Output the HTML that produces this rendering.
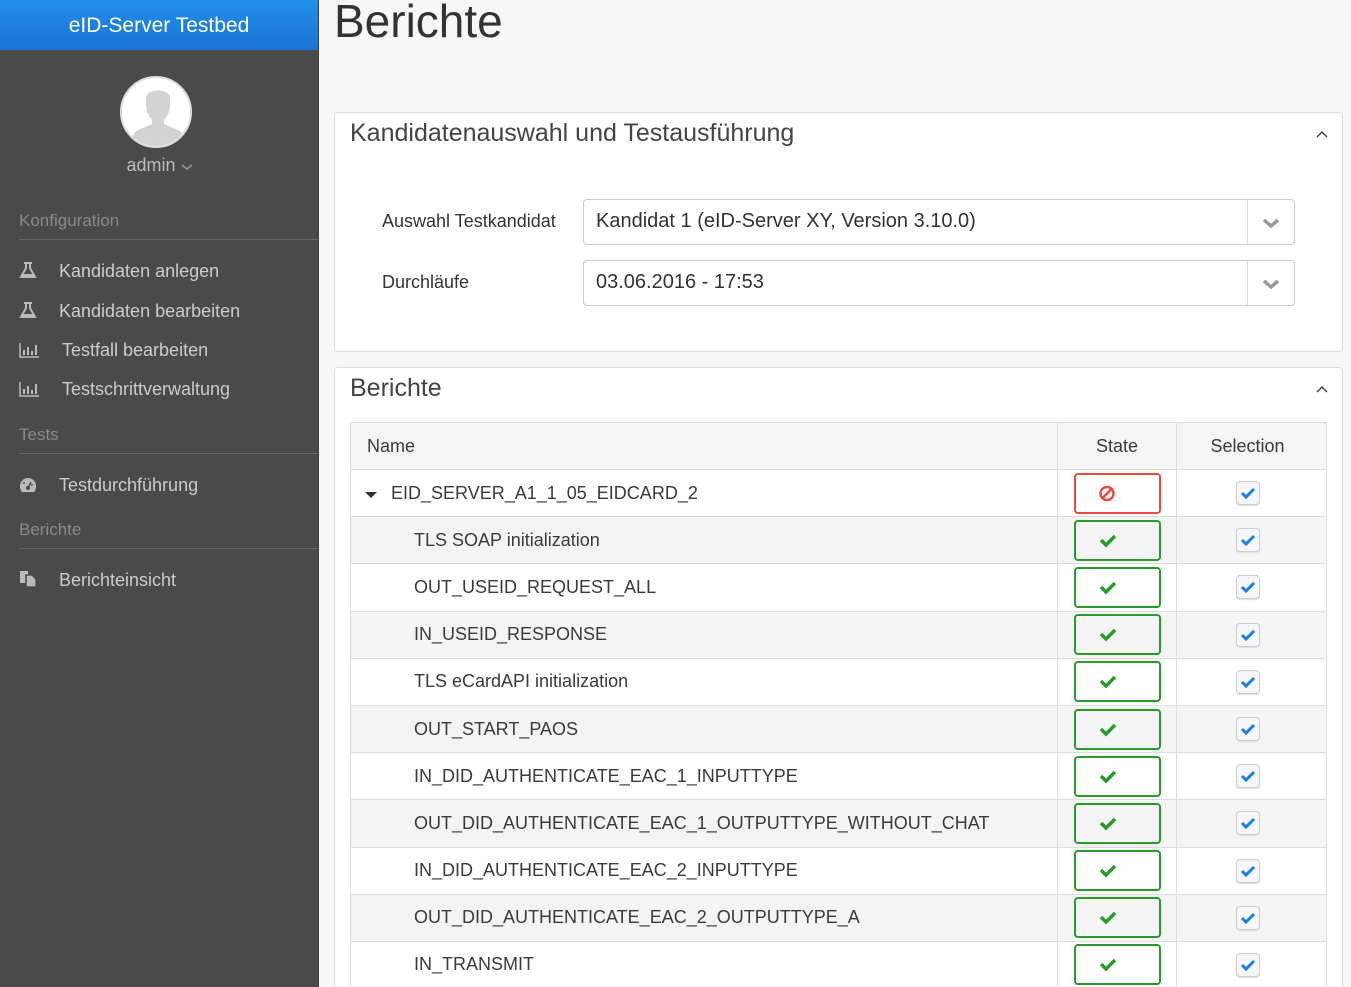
<!DOCTYPE html>
<html style="overflow:hidden"><head><meta charset="utf-8"><style>
*{box-sizing:border-box;margin:0;padding:0}
html,body{width:1351px;height:987px;overflow:hidden}
body{background:#f7f7f7;font-family:"Liberation Sans",sans-serif;position:relative}
.sb{position:absolute;left:0;top:0;width:319px;height:987px;background:#4a4a4a;border-right:1px solid #3a3a3a}
.brand{height:50px;background:linear-gradient(#2090e8,#1a72d6);color:#fff;font-size:21px;text-align:center;line-height:52px;font-weight:300}
.av{position:absolute;left:120px;top:76px;width:72px;height:72px;border-radius:50%;background:#fff;border:2px solid #ddd;overflow:hidden}
.adm{position:absolute;top:155px;width:319px;text-align:center;color:#bbb;font-size:18px}
.sec{position:absolute;left:19px;width:300px;color:#8a8a8a;font-size:17px;border-bottom:1px solid #666;padding-bottom:8px}
.it{position:absolute;left:19px;color:#ccc;font-size:18px;white-space:nowrap}
.it svg{display:inline-block;vertical-align:-2px;margin-right:22px}
.title{position:absolute;left:334px;top:-6px;font-size:46px;color:#333;font-weight:300}
.pn{position:absolute;left:334px;width:1009px;background:#fff;border:1px solid #ddd;border-radius:4px}
.ph{position:absolute;left:15px;top:6px;font-size:25px;color:#444;font-weight:300}
.car{position:absolute;right:14px;top:12px}
.lbl{position:absolute;left:47px;font-size:18px;color:#333}
.sel{position:absolute;left:248px;width:712px;height:46px;border:1px solid #ccc;border-radius:4px;font-size:20px;color:#333;padding:10px 12px}
.sel span{position:absolute;right:0;top:0;width:47px;height:44px;border-left:1px solid #ddd}
table{position:absolute;left:15px;top:54px;width:977px;border-collapse:collapse;font-size:18px;color:#3a3a3a}
td,th{border:1px solid #ddd;height:47.2px;font-weight:normal}
th{background:#f5f5f5;font-size:18px;height:47px}
tr:nth-child(odd) td{background:#f4f4f4}
.n{padding-left:63px}
.st{width:119px;text-align:center}
.sl{width:150px;text-align:center;padding-right:8px}
.b{display:inline-block;width:87px;height:41px;border:2px solid #2a9a2a;border-radius:4px;vertical-align:middle;position:relative}
.b.r{border-color:#e84c3d}
.cb{display:inline-block;width:24px;height:24px;border:1px solid #ccc;border-radius:4px;background:#f4f6fa;vertical-align:middle;box-shadow:0 1px 1px #ddd;position:relative}
</style></head><body>
<div class="sb">
<div class="brand">eID-Server Testbed</div>
<div class="av"><svg width="72" height="72" viewBox="0 0 72 72"><rect width="72" height="72" fill="#fff"/><path d="M24 20c0-10 24-10 24 0v8c0 6-4 12-6 14v4l14 6c4 2 6 6 6 12v8H10v-8c0-6 2-10 6-12l14-6v-4c-2-2-6-8-6-14z" fill="#d3d3d3"/></svg></div>
<div class="adm">admin <svg width="12" height="8"><path d="M1 2l5 4 5-4" stroke="#999" stroke-width="1.5" fill="none"/></svg></div>
<div class="sec" style="top:211px">Konfiguration</div>
<div class="it" style="top:261px"><svg width="18" height="17"><path d="M5 1h8M7 1v5L2 15h14L11 6V1" stroke="#bbb" stroke-width="2" fill="none"/><path d="M4 12h10l2 3H2z" fill="#bbb"/></svg>Kandidaten anlegen</div>
<div class="it" style="top:301px"><svg width="18" height="17"><path d="M5 1h8M7 1v5L2 15h14L11 6V1" stroke="#bbb" stroke-width="2" fill="none"/><path d="M4 12h10l2 3H2z" fill="#bbb"/></svg>Kandidaten bearbeiten</div>
<div class="it" style="top:340px"><svg width="21" height="16"><path d="M1 1v14h19" stroke="#bbb" stroke-width="1.5" fill="none"/><path d="M4 8h2v5H4zM8 5h2v8H8zM12 9h2v4h-2zM16 3h2v10h-2z" fill="#bbb"/></svg>Testfall bearbeiten</div>
<div class="it" style="top:379px"><svg width="21" height="16"><path d="M1 1v14h19" stroke="#bbb" stroke-width="1.5" fill="none"/><path d="M4 8h2v5H4zM8 5h2v8H8zM12 9h2v4h-2zM16 3h2v10h-2z" fill="#bbb"/></svg>Testschrittverwaltung</div>
<div class="sec" style="top:425px">Tests</div>
<div class="it" style="top:475px"><svg width="18" height="16"><path d="M9 1a8 8 0 0 0-8 8c0 3 1 5 2 6h12c1-1 2-3 2-6a8 8 0 0 0-8-8z" fill="#bbb"/><circle cx="9" cy="11" r="2" fill="#4a4a4a"/><path d="M9 11l3-6" stroke="#4a4a4a" stroke-width="1.5"/><circle cx="5" cy="6" r="1" fill="#4a4a4a"/><circle cx="13" cy="8" r="1" fill="#4a4a4a"/></svg>Testdurchführung</div>
<div class="sec" style="top:520px">Berichte</div>
<div class="it" style="top:570px"><svg width="18" height="18"><path d="M1 1h8v12H1z" fill="#bbb"/><path d="M7 5h6l4 4v8H7z" fill="#bbb" stroke="#4a4a4a" stroke-width="1.5"/></svg>Berichteinsicht</div>
</div>
<div class="title">Berichte</div>
<div class="pn" style="top:112px;height:240px">
<div class="ph">Kandidatenauswahl und Testausführung</div><div class="car"><svg width="12" height="8"><path d="M1 7l5-5 5 5" stroke="#333" stroke-width="1.3" fill="none"/></svg></div>
<div class="lbl" style="top:98px">Auswahl Testkandidat</div>
<div class="sel" style="top:86px">Kandidat 1 (eID-Server XY, Version 3.10.0)<span><svg width="47" height="44"><path d="M16 20l7 6 7-6" stroke="#999" stroke-width="3.5" fill="none"/></svg></span></div>
<div class="lbl" style="top:159px">Durchläufe</div>
<div class="sel" style="top:147px">03.06.2016 - 17:53<span><svg width="47" height="44"><path d="M16 20l7 6 7-6" stroke="#999" stroke-width="3.5" fill="none"/></svg></span></div>
</div>
<div class="pn" style="top:367px;height:640px">
<div class="ph">Berichte</div><div class="car"><svg width="12" height="8"><path d="M1 7l5-5 5 5" stroke="#333" stroke-width="1.3" fill="none"/></svg></div>
<table>
<tr><th style="text-align:left;padding-left:16px">Name</th><th class="st">State</th><th class="sl">Selection</th></tr>
<tr><td style="padding-left:14px"><svg width="12" height="8" style="margin-right:14px"><path d="M0 1h12L6 7z" fill="#333"/></svg>EID_SERVER_A1_1_05_EIDCARD_2</td><td class="st"><span class="b r"><svg width="83" height="37"><circle cx="31" cy="18.5" r="6.5" stroke="#e84c3d" stroke-width="2.5" fill="none"/><path d="M26.5 23l9-9" stroke="#e84c3d" stroke-width="2.5"/></svg></span></td><td class="sl"><span class="cb"><svg width="22" height="22"><path d="M5 11l4 4 8-8" stroke="#1a7ee6" stroke-width="3" fill="none"/></svg></span></td></tr>
</table>
</div>
<script>
var names=["TLS SOAP initialization","OUT_USEID_REQUEST_ALL","IN_USEID_RESPONSE","TLS eCardAPI initialization","OUT_START_PAOS","IN_DID_AUTHENTICATE_EAC_1_INPUTTYPE","OUT_DID_AUTHENTICATE_EAC_1_OUTPUTTYPE_WITHOUT_CHAT","IN_DID_AUTHENTICATE_EAC_2_INPUTTYPE","OUT_DID_AUTHENTICATE_EAC_2_OUTPUTTYPE_A","IN_TRANSMIT"];
var t=document.querySelector('table tbody')||document.querySelector('table');
names.forEach(function(n){var r=document.createElement('tr');r.innerHTML='<td class="n">'+n+'</td><td class="st"><span class="b"><svg width="83" height="37"><path d="M25 18l5 5 9-9" stroke="#2a9a2a" stroke-width="3.5" fill="none"/></svg></span></td><td class="sl"><span class="cb"><svg width="22" height="22"><path d="M5 11l4 4 8-8" stroke="#1a7ee6" stroke-width="3" fill="none"/></svg></span></td>';t.appendChild(r);});
</script>
</body></html>
